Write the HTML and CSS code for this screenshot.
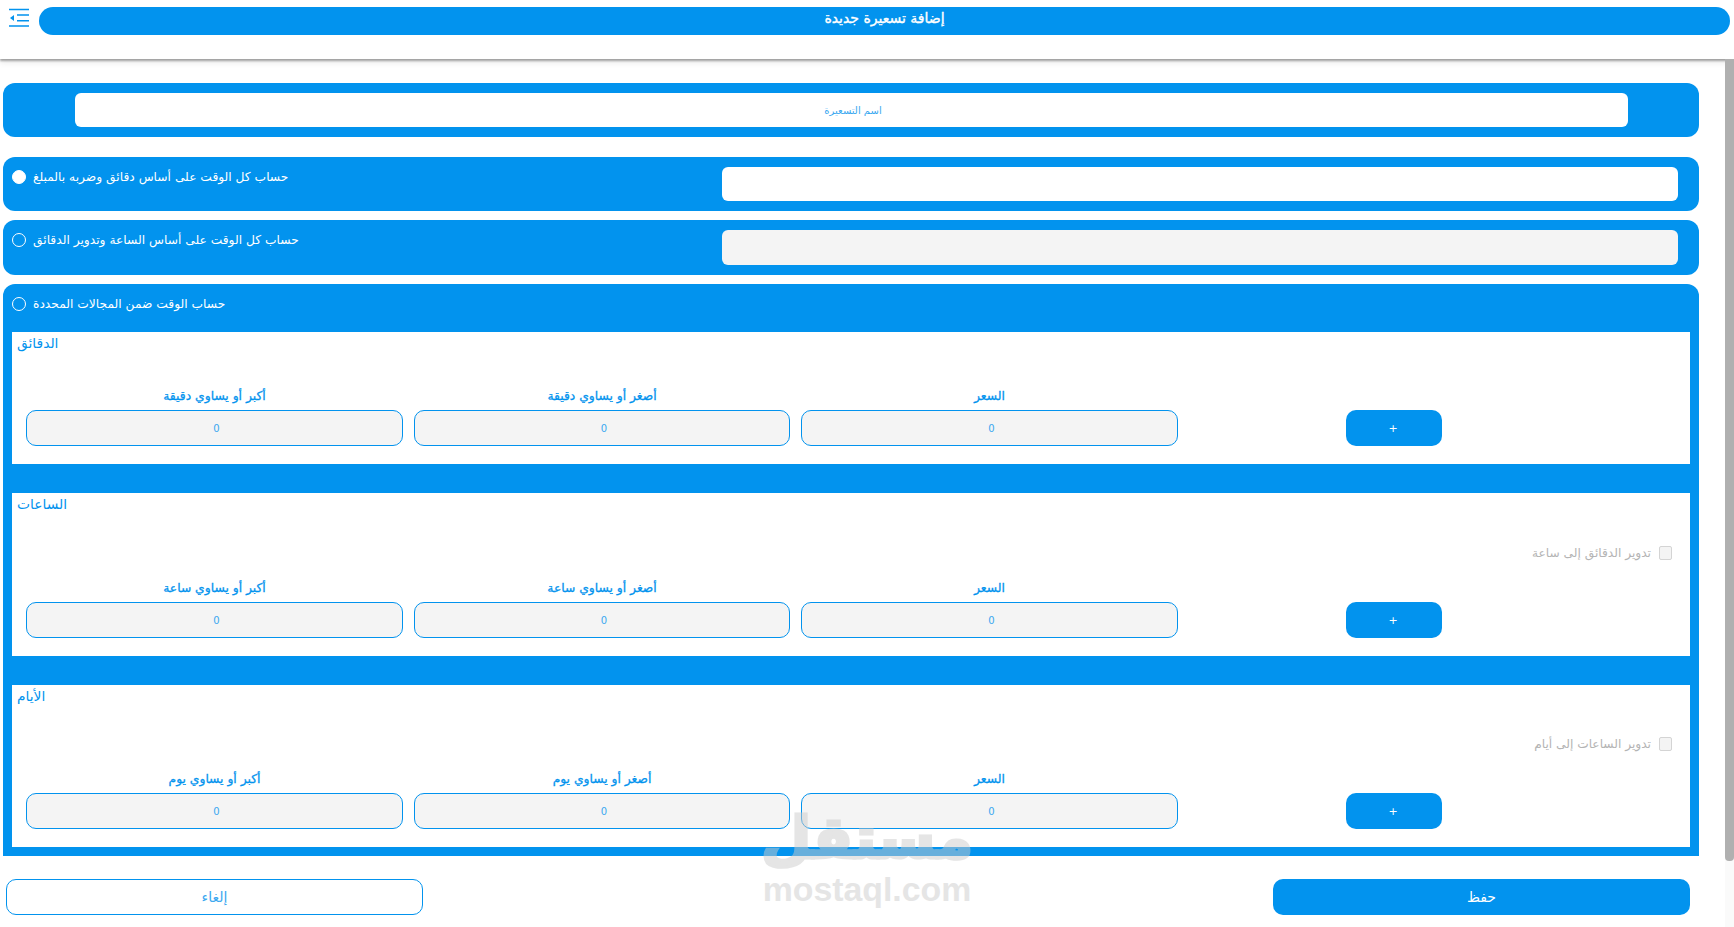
FILE: index.html
```html
<!DOCTYPE html>
<html lang="ar">
<head>
<meta charset="utf-8">
<title>إضافة تسعيرة جديدة</title>
<link rel="stylesheet" href="styles.css">
</head>
<body>
<div class="app">
  <header class="topbar">
    <button class="menu" type="button" aria-label="القائمة">
      <svg width="20" height="18" viewBox="0 0 20 18"><path d="M0 .6h20M8 6h12M8 11.7h12M0 17h20" stroke="#0293ee" stroke-width="1.5" fill="none"/><path d="M1 8.9l4-3v6z" fill="#0293ee"/></svg>
    </button>
    <h1 class="title">إضافة تسعيرة جديدة</h1>
  </header>
  <main class="content">
    <section class="panel name-panel">
      <input class="name-input" type="text" placeholder="اسم التسعيرة">
    </section>
    <section class="panel option">
      <label class="option-label"><input class="radio" type="radio" name="mode" checked><span>حساب كل الوقت على أساس دقائق وضربه بالمبلغ</span></label>
      <input class="amount" type="text">
    </section>
    <section class="panel option option-tall">
      <label class="option-label"><input class="radio" type="radio" name="mode"><span>حساب كل الوقت على أساس الساعة وتدوير الدقائق</span></label>
      <input class="amount is-off" type="text">
    </section>
    <section class="panel ranges">
      <label class="option-label ranges-label"><input class="radio" type="radio" name="mode"><span>حساب الوقت ضمن المجالات المحددة</span></label>

      <div class="range range-min">
        <h2 class="range-title">الدقائق</h2>
        <div class="fields">
          <div class="field"><label>أكبر أو يساوي دقيقة</label><input type="text" value="0"></div>
          <div class="field"><label>أصغر أو يساوي دقيقة</label><input type="text" value="0"></div>
          <div class="field"><label>السعر</label><input type="text" value="0"></div>
          <button class="add" type="button">+</button>
        </div>
      </div>

      <div class="range range-hour">
        <h2 class="range-title">الساعات</h2>
        <label class="round"><span>تدوير الدقائق إلى ساعة</span><input type="checkbox" disabled></label>
        <div class="fields">
          <div class="field"><label>أكبر أو يساوي ساعة</label><input type="text" value="0"></div>
          <div class="field"><label>أصغر أو يساوي ساعة</label><input type="text" value="0"></div>
          <div class="field"><label>السعر</label><input type="text" value="0"></div>
          <button class="add" type="button">+</button>
        </div>
      </div>

      <div class="range range-day">
        <h2 class="range-title">الأيام</h2>
        <label class="round"><span>تدوير الساعات إلى أيام</span><input type="checkbox" disabled></label>
        <div class="fields">
          <div class="field"><label>أكبر أو يساوي يوم</label><input type="text" value="0"></div>
          <div class="field"><label>أصغر أو يساوي يوم</label><input type="text" value="0"></div>
          <div class="field"><label>السعر</label><input type="text" value="0"></div>
          <button class="add" type="button">+</button>
        </div>
      </div>
    </section>
  </main>
  <footer class="actions">
    <button class="btn btn-cancel" type="button">إلغاء</button>
    <button class="btn btn-save" type="button">حفظ</button>
  </footer>
</div>
<div class="scrollbar"><div class="thumb"></div></div>
<div class="watermark"><span class="wm-ar">مستقل</span><span class="wm-en">mostaql.com</span></div>
</body>
</html>
```
FILE: styles.css
```css
* { box-sizing: border-box; }
html, body { margin: 0; height: 100%; overflow: hidden; background: #fff; }
body { font-family: "DejaVu Sans", sans-serif; color: #0293ee; }
button, input { font-family: inherit; }

.app { height: 927px; }

.topbar { height: 59px; display: flex; align-items: flex-start; padding: 7px 4px 0 9px; box-shadow: 0 2px 2px rgba(0,0,0,.33), 0 4px 6px rgba(0,0,0,.08); position: relative; }
.menu { width: 20px; height: 18px; padding: 0; margin: 2px 10px 0 0; border: 0; background: none; display: block; }
.menu svg { display: block; overflow: visible; }
.title { flex: 1; height: 28px; margin: 0; background: #0293ee; border-radius: 14px; color: #fff; font-size: 14px; font-weight: 400; -webkit-text-stroke: .35px #fff; line-height: 23px; text-align: center; }

.content { width: 1696px; margin: 24px 0 0 3px; }
.panel { background: #0293ee; border-radius: 12px; }
.name-panel { height: 54px; padding: 10px 71px 10px 72px; margin-bottom: 20px; }
.name-input { display: block; width: 100%; height: 34px; padding: 0 0 0 3px; border: 0; border-radius: 6px; background: #fff; text-align: center; font-size: 10px; color: #0293ee; }
.name-input::placeholder { color: #3aa8f0; opacity: 1; }

.option { height: 54px; padding: 10px 21px 0 9px; margin-bottom: 9px; display: flex; justify-content: space-between; align-items: flex-start; }
.option-tall { height: 55px; }
.option-label { display: flex; align-items: center; gap: 7px; height: 19px; color: #fff; font-size: 12.25px; }
.radio { appearance: none; width: 14px; height: 14px; margin: 0; border: 1px solid #fff; border-radius: 50%; background: transparent; flex: none; }
.radio:checked { background: #fff; }
.amount { width: 956px; height: 34px; border: 0; border-radius: 6px; background: #fff; }
.amount.is-off { height: 35px; background: #f4f4f4; }

.ranges { height: 572px; padding: 10px 9px 0; border-radius: 12px 12px 0 0; }
.ranges-label { margin-bottom: 19px; }
.range { background: #fff; padding-top: 2px; margin-bottom: 29px; }
.range-min { height: 132px; }
.range-hour { height: 163px; }
.range-day { height: 162px; margin-bottom: 0; }
.range-title { margin: 0 0 0 5px; height: 18px; font-size: 13.8px; font-weight: 400; line-height: 18px; }
.range-min .range-title { margin-bottom: 35px; }

.round { display: flex; justify-content: flex-end; align-items: center; gap: 8px; height: 16px; margin: 32px 18px 18px 0; color: #b4b4b4; font-size: 12.2px; }
.range-day .round { margin: 31px 18px 18px 0; }
.round input { appearance: none; width: 13px; height: 14px; margin: 0; background: #f4f4f4; border: 1px solid #d4d4d4; border-radius: 2px; }

.fields { display: grid; grid-template-columns: 377px 376px 377px 1fr; column-gap: 11px; align-items: end; padding: 0 91px 0 14px; }
.field { display: flex; flex-direction: column; }
.field label { height: 18px; margin-bottom: 5px; text-align: center; font-size: 12.3px; font-weight: 400; -webkit-text-stroke: .3px #0293ee; line-height: 19px; }
.field input { height: 36px; padding: 0 0 0 4px; border: 1px solid #0293ee; border-radius: 10px; background: #f4f4f4; color: #3aa8f0; text-align: center; font-size: 10px; }
.add { justify-self: center; width: 96px; height: 36px; border: 0; border-radius: 10px; background: #0293ee; color: #fff; font-size: 11px; padding: 0 2px 0 0; }

.actions { display: flex; justify-content: space-between; width: 1684px; margin: 23px 0 0 6px; }
.btn { height: 36px; border-radius: 10px; font-size: 14px; }
.btn-cancel { width: 417px; background: #fff; border: 1px solid #0293ee; color: #3aa8f0; }
.btn-save { width: 417px; background: #0293ee; border: 0; color: #fff; }

.scrollbar { position: absolute; right: 0; top: 59px; bottom: 0; width: 9px; background: #fafafa; }
.thumb { height: 802px; background: #b0b0b0; border-radius: 0 0 4px 4px; }

.watermark { position: absolute; left: 763px; top: 803px; width: 208px; display: flex; flex-direction: column; align-items: center; color: #ccc; opacity: .5; pointer-events: none; }
.wm-ar { font-size: 58px; font-weight: 700; line-height: 70px; height: 68px; -webkit-text-stroke: 3px #ccc; }
.wm-en { font-family: "Liberation Sans", sans-serif; font-size: 33.8px; font-weight: 700; line-height: 36px; }
```
